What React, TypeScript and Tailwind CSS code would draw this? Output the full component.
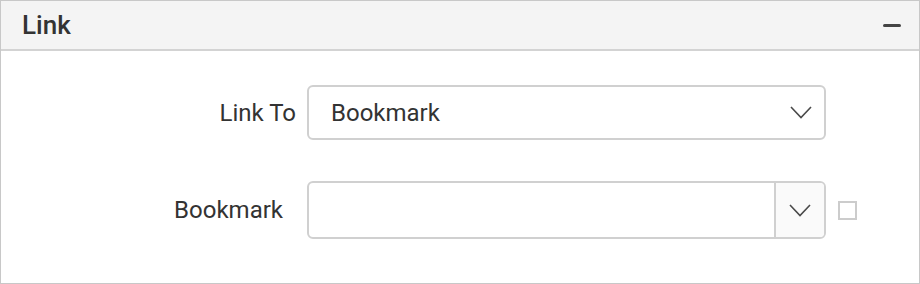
import { useState } from 'react';

function Chevron() {
  return (
    <svg width="22" height="13" viewBox="0 0 22 13" fill="none">
      <path d="M1 1l10 10.5L21 1" stroke="#4a4a4a" strokeWidth="1.6" />
    </svg>
  );
}

export default function App() {
  const [linkTo] = useState('Bookmark');

  return (
    <div className="h-[284px] w-[920px] bg-white font-['Roboto',sans-serif] text-[#333]">
      <div className="flex h-full flex-col border border-[#c8c8c8]">
        <div className="flex h-[50px] items-center justify-between border-b-2 border-[#d3d3d3] bg-[#f4f4f4] pl-[21px] pr-[18px]">
          <span className="text-[26px] font-medium text-[#333]">Link</span>
          <span className="block h-[3px] w-[18px] rounded-sm bg-[#444]" />
        </div>

        <div className="flex flex-col gap-[41px] pt-[34px]">
          <div className="flex items-center">
            <label className="w-[295px] text-right text-[24px] text-[#333]">Link To</label>
            <div className="ml-[11px] flex h-[55px] w-[519px] items-center justify-between rounded-[6px] border-2 border-[#d0d0d0] pl-[22px] pr-[12px]">
              <span className="text-[24px] text-[#333]">{linkTo}</span>
              <Chevron />
            </div>
          </div>

          <div className="flex items-center">
            <label className="w-[282px] text-right text-[24px] text-[#333]">Bookmark</label>
            <div className="ml-[24px] flex h-[58px] w-[519px] overflow-hidden rounded-[6px] border-2 border-[#d0d0d0]">
              <div className="flex-1" />
              <div className="flex w-[50px] items-center justify-center border-l-2 border-[#d0d0d0] bg-[#fafafa]">
                <Chevron />
              </div>
            </div>
            <span className="ml-[12px] block h-[19px] w-[19px] border-2 border-[#cccccc] bg-white" />
          </div>
        </div>
      </div>
    </div>
  );
}
